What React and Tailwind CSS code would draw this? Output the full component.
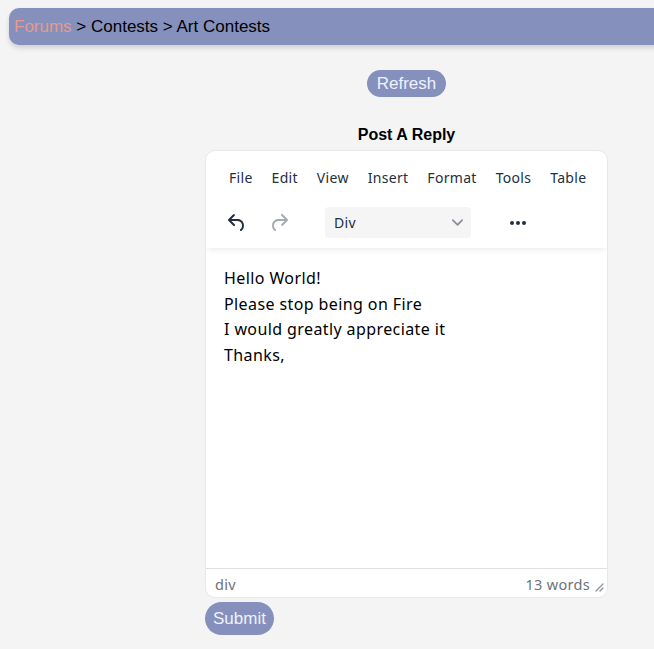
import React from 'react';

const menus = ['File', 'Edit', 'View', 'Insert', 'Format', 'Tools', 'Table'];

function UndoIcon({ className }) {
  return (
    <svg viewBox="0 0 24 24" className={className} fill="currentColor">
      <path d="M6.4 8H12c3.7 0 6.2 2 6.8 5.1.6 2.7-.4 5.6-2.3 6.8a1 1 0 0 1-1-1.8c1.1-.6 1.8-2.7 1.4-4.6-.5-2.1-2.1-3.5-4.9-3.5H6.4l3.3 3.3a1 1 0 1 1-1.4 1.4l-5-5a1 1 0 0 1 0-1.4l5-5a1 1 0 0 1 1.4 1.4L6.4 8Z" />
    </svg>
  );
}

function RedoIcon({ className }) {
  return (
    <svg viewBox="0 0 24 24" className={className} fill="currentColor">
      <path d="M17.6 10H12c-2.8 0-4.4 1.4-4.9 3.5-.4 2 .3 4 1.4 4.6a1 1 0 1 1-1 1.8c-2-1.2-2.9-4.1-2.3-6.8.6-3 3-5.1 6.8-5.1h5.6l-3.3-3.3a1 1 0 1 1 1.4-1.4l5 5a1 1 0 0 1 0 1.4l-5 5a1 1 0 0 1-1.4-1.4l3.3-3.3Z" />
    </svg>
  );
}

export default function App() {
  return (
    <div className="min-h-screen bg-[#f4f4f4] overflow-x-hidden pt-[8px] pb-4">
      {/* breadcrumb bar */}
      <div className="ml-[9px] -mr-6 h-[37px] rounded-[10px] bg-[#8590bc] shadow-[0_3px_5px_rgba(0,0,0,0.15)] flex items-center pl-[5px] text-[17px] font-['Liberation_Sans',Arial,sans-serif]">
        <span className="text-[#e8998d]">Forums</span>
        <span className="text-black whitespace-pre"> &gt; Contests &gt; Art Contests</span>
      </div>

      <div className="ml-[205px] w-[403px] flex flex-col">
        <div className="flex flex-col items-center">
          <button className="mt-[25px] h-[27px] px-[10px] rounded-full bg-[#8590bc] text-[#eef2ff] text-[17px] leading-none font-['Liberation_Sans',Arial,sans-serif]">
            Refresh
          </button>
          <div className="mt-[28px] h-[20px] flex items-center text-[16px] font-bold text-black font-['Liberation_Sans',Arial,sans-serif]">
            Post A Reply
          </div>
        </div>

        {/* editor */}
        <div className="mt-[5px] h-[448px] bg-white rounded-[10px] border border-[#e8e8e8] flex flex-col overflow-hidden font-['Noto_Sans',sans-serif]">
          <div className="relative z-10 shadow-[0_4px_6px_-2px_rgba(0,0,0,0.08)] pb-[10px]">
            <div className="flex items-center gap-[19px] pl-[23px] h-[52px] text-[14px] tracking-[0.3px] text-[#222f3e]">
              {menus.map((m) => (
                <span key={m}>{m}</span>
              ))}
            </div>
            <div className="flex items-center h-[31px] mt-[4px]">
              <div className="ml-[19px] w-[24px] flex justify-center text-[#222f3e]">
                <UndoIcon className="w-[24px] h-[24px]" />
              </div>
              <div className="ml-[18px] w-[24px] flex justify-center text-[#a6abb3]">
                <RedoIcon className="w-[24px] h-[24px]" />
              </div>
              <div className="ml-[34px] w-[146px] h-[31px] rounded-[4px] bg-[#f5f5f5] flex items-center justify-between pl-[9px] pr-[8px] text-[14px] tracking-[0.3px] text-[#222f3e]">
                <span>Div</span>
                <svg viewBox="0 0 10 10" className="w-[11px] h-[11px] text-[#8a9099]" fill="currentColor">
                  <path d="M8.7 2.2c.3-.3.8-.3 1 0 .4.4.4.9 0 1.2L5.7 7.8c-.3.3-.9.3-1.2 0L.2 3.4a.8.8 0 0 1 0-1.2c.3-.3.8-.3 1.1 0L5 6l3.7-3.8Z" />
                </svg>
              </div>
              <div className="ml-[35px] w-[24px] flex justify-center text-[#222f3e]">
                <svg viewBox="0 0 24 24" className="w-[24px] h-[24px]" fill="currentColor">
                  <path d="M6 10a2 2 0 0 0-2 2c0 1.1.9 2 2 2a2 2 0 0 0 2-2 2 2 0 0 0-2-2Zm12 0a2 2 0 0 0-2 2c0 1.1.9 2 2 2a2 2 0 0 0 2-2 2 2 0 0 0-2-2Zm-6 0a2 2 0 0 0-2 2c0 1.1.9 2 2 2a2 2 0 0 0 2-2 2 2 0 0 0-2-2Z" />
                </svg>
              </div>
            </div>
          </div>

          <div className="flex-1 pl-[18px] pt-[18px] text-[16px] leading-[25.5px] tracking-[0.4px] text-black">
            <p>Hello World!</p>
            <p>Please stop being on Fire</p>
            <p>I would greatly appreciate it</p>
            <p>Thanks,</p>
          </div>

          <div className="h-[29px] border-t border-[#e0e0e0] flex items-center justify-between pl-[9px] pr-[3px] pt-[4px] text-[14.5px] tracking-[0.3px] text-[#6d737c]">
            <span>div</span>
            <div className="flex items-center gap-[4px]">
              <span>13 words</span>
              <svg viewBox="0 0 10 10" className="w-[10px] h-[10px] mt-[4px] text-[#8a9099]" stroke="currentColor" strokeWidth="1.3" strokeLinecap="round">
                <path d="M9 2 2 9M9 6 6 9" />
              </svg>
            </div>
          </div>
        </div>

        <div>
          <button className="mt-[4px] h-[33px] px-[8px] rounded-full bg-[#8590bc] text-[#eef2ff] text-[17px] leading-none font-['Liberation_Sans',Arial,sans-serif]">
            Submit
          </button>
        </div>
      </div>
    </div>
  );
}
